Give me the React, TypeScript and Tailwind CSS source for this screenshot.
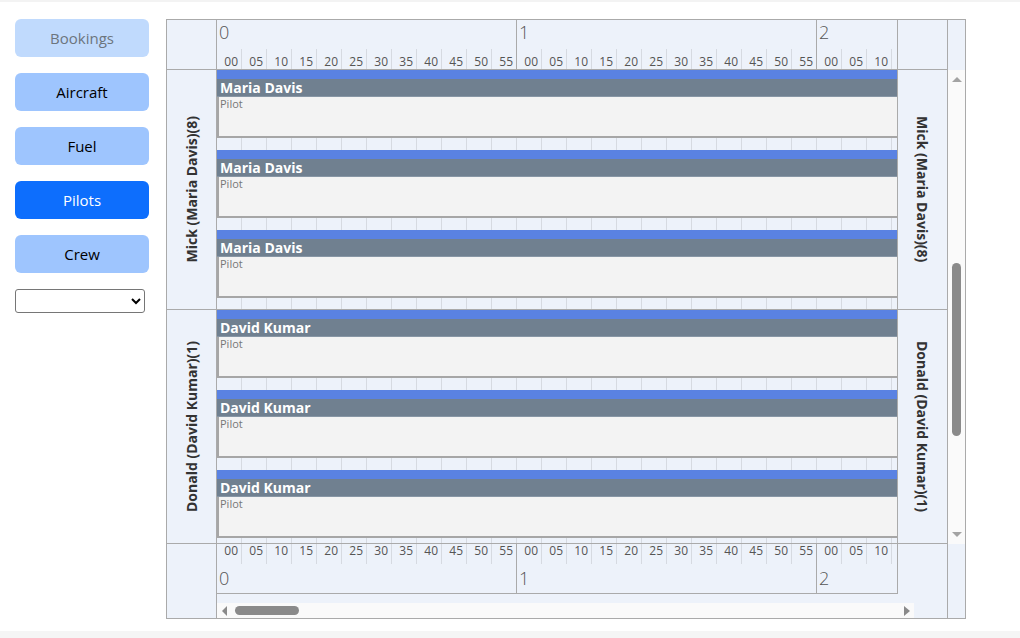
import React from 'react';

const hours = [0, 1, 2];
const mins = ['00', '05', '10', '15', '20', '25', '30', '35', '40', '45', '50', '55'];

const resources = [
    { label: 'Mick (Maria Davis)(8)', pilot: 'Maria Davis' },
    { label: 'Donald (David Kumar)(1)', pilot: 'David Kumar' },
];

const navItems = [
    { name: 'Bookings', cls: 'bg-[#c0dafd] text-[#6c757d]' },
    { name: 'Aircraft', cls: 'bg-[#9ec5fe] text-black' },
    { name: 'Fuel', cls: 'bg-[#9ec5fe] text-black' },
    { name: 'Pilots', cls: 'bg-[#0d6efd] text-white' },
    { name: 'Crew', cls: 'bg-[#9ec5fe] text-black' },
];

// the last hour is only partly on screen, so only the visible slots get rendered
const slotsFor = (h: number) => (h === 2 ? ['00', '05', '10', ''] : mins);

const MinuteRow = ({ h, top }: { h: number; top: boolean }) => {
    const slots = slotsFor(h);
    return (
        <div className="flex h-[20px]">
            {slots.map((m, i) => {
                const w = h === 2 && i === 3 ? 'w-[5px]' : i < 11 ? 'w-[25px] border-r border-[#d6dae1]' : 'w-[24px]';
                return (
                    <div
                        key={i}
                        className={`${w} shrink-0 h-full flex justify-end pr-[3px] text-[12px] leading-[14px] text-[#555] ${top ? 'items-end' : 'items-start'}`}
                    >
                        {m}
                    </div>
                );
            })}
        </div>
    );
};

const EventBox = ({ pilot }: { pilot: string }) => (
    <div className="h-[68px] w-full flex flex-col">
        <div className="h-[9px] bg-[#5a82e2]" />
        <div className="h-[18px] bg-[#708090] text-white font-bold text-[14px] leading-[18px] pl-[3px] border-b border-[#8796a5]">
            {pilot}
        </div>
        <div className="flex-1 bg-[#f3f3f3] border-l-2 border-b-2 border-[#a6a6a6] pl-[1px] text-[11px] leading-[14px] text-[#777]">
            Pilot
        </div>
    </div>
);

const ResourceLanes = ({ pilot, last }: { pilot: string; last?: boolean }) => (
    <div className={`${last ? 'h-[240px]' : 'h-[240px] border-b border-[#aaa]'} shrink-0 flex flex-col`}>
        {[0, 1, 2].map((i) => (
            <div key={i} className={`${i < 2 ? 'h-[80px]' : 'flex-1'} shrink-0`}>
                <EventBox pilot={pilot} />
            </div>
        ))}
    </div>
);

const App = () => {
    return (
        <div className="h-[638px] w-[1020px] flex flex-col bg-white overflow-hidden" style={{ fontFamily: '"Open Sans", "Noto Sans", sans-serif' }}>
            <div className="h-[2px] bg-[#f3f3f3]" />
            <div className="flex-1 flex pt-[17px] px-[15px] gap-[17px]">
                {/* side nav */}
                <div className="w-[134px] flex flex-col gap-[16px]">
                    {navItems.map((n) => (
                        <button key={n.name} className={`h-[38px] w-full rounded-md text-[15px] ${n.cls}`}>
                            {n.name}
                        </button>
                    ))}
                    <select className="w-[130px] h-[24px] border border-[#767676] rounded-[3px] bg-white text-[13px]">
                        <option value=""></option>
                    </select>
                </div>

                {/* scheduler */}
                <div className="w-[800px] h-[600px] border border-[#aaa] bg-[#edf2fa] flex flex-col text-[#333]">
                    {/* header */}
                    <div className="flex h-[50px] shrink-0">
                        <div className="w-[50px] border-r border-b border-[#aaa]" />
                        <div className="w-[681px] border-r border-b border-[#aaa] flex">
                            {hours.map((h) => (
                                <div key={h} className={`${h < 2 ? 'w-[300px] border-r border-[#aaa]' : 'w-[80px]'} h-[49px] shrink-0 flex flex-col`}>
                                    <div className="h-[29px] pl-[2px] text-[18px] leading-[24px] text-[#555] font-light">{h}</div>
                                    <MinuteRow h={h} top />
                                </div>
                            ))}
                        </div>
                        <div className="w-[50px] border-r border-b border-[#aaa]" />
                        <div className="w-[17px]" />
                    </div>

                    {/* body */}
                    <div className="flex h-[474px] shrink-0">
                        <div className="w-[50px] border-r border-b border-[#aaa] flex flex-col overflow-hidden">
                            {resources.map((r, i) => (
                                <div key={r.label} className={`${i === 0 ? 'h-[240px] border-b border-[#aaa]' : 'flex-1'} shrink-0 flex items-center justify-center`}>
                                    <span className="[writing-mode:vertical-rl] rotate-180 font-bold text-[14px] whitespace-nowrap">{r.label}</span>
                                </div>
                            ))}
                        </div>
                        <div className="w-[681px] border-r border-b border-[#aaa] overflow-hidden bg-[repeating-linear-gradient(to_right,transparent_0_24px,#d6dae1_24px_25px)] flex flex-col">
                            <ResourceLanes pilot={resources[0].pilot} />
                            <ResourceLanes pilot={resources[1].pilot} last />
                        </div>
                        <div className="w-[50px] border-r border-b border-[#aaa] flex flex-col overflow-hidden">
                            {resources.map((r, i) => (
                                <div key={r.label} className={`${i === 0 ? 'h-[240px] border-b border-[#aaa]' : 'flex-1'} shrink-0 flex items-center justify-center`}>
                                    <span className="[writing-mode:vertical-rl] font-bold text-[14px] whitespace-nowrap">{r.label}</span>
                                </div>
                            ))}
                        </div>
                        {/* vertical scrollbar */}
                        <div className="w-[17px] bg-[#fafafa] flex flex-col items-center">
                            <svg width="10" height="6" viewBox="0 0 10 6" className="mt-[7px]">
                                <polygon points="0,5 5,0 10,5" fill="#a3a3a3" />
                            </svg>
                            <div className="h-[180px]" />
                            <div className="w-[9px] h-[173px] rounded-full bg-[#8a8a8a]" />
                            <div className="flex-1" />
                            <svg width="10" height="6" viewBox="0 0 10 6" className="mb-[6px]">
                                <polygon points="0,0 10,0 5,5" fill="#a3a3a3" />
                            </svg>
                        </div>
                    </div>

                    {/* footer */}
                    <div className="flex flex-1">
                        <div className="w-[50px] border-r border-[#aaa]" />
                        <div className="w-[731px] border-r border-[#aaa] flex flex-col">
                            <div className="w-[681px] h-[50px] border-r border-b border-[#aaa] flex">
                                {hours.map((h) => (
                                    <div key={h} className={`${h < 2 ? 'w-[300px] border-r border-[#aaa]' : 'w-[80px]'} h-[49px] shrink-0 flex flex-col`}>
                                        <MinuteRow h={h} top={false} />
                                        <div className="h-[29px] pl-[2px] text-[18px] leading-[28px] text-[#555] font-light">{h}</div>
                                    </div>
                                ))}
                            </div>
                            <div className="pt-[9px]">
                                <div className="w-[697px] h-[15px] bg-[#fafafa] flex items-center">
                                    <svg width="6" height="10" viewBox="0 0 6 10" className="ml-[5px]">
                                        <polygon points="5,0 5,10 0,5" fill="#8a8a8a" />
                                    </svg>
                                    <div className="ml-[7px] w-[64px] h-[9px] rounded-full bg-[#8a8a8a]" />
                                    <div className="flex-1" />
                                    <svg width="6" height="10" viewBox="0 0 6 10" className="mr-[4px]">
                                        <polygon points="0,0 6,5 0,10" fill="#8a8a8a" />
                                    </svg>
                                </div>
                            </div>
                        </div>
                        <div className="w-[17px]" />
                    </div>
                </div>
            </div>
            <div className="h-[7px] bg-[#f5f5f5]" />
        </div>
    );
};

export default App;
